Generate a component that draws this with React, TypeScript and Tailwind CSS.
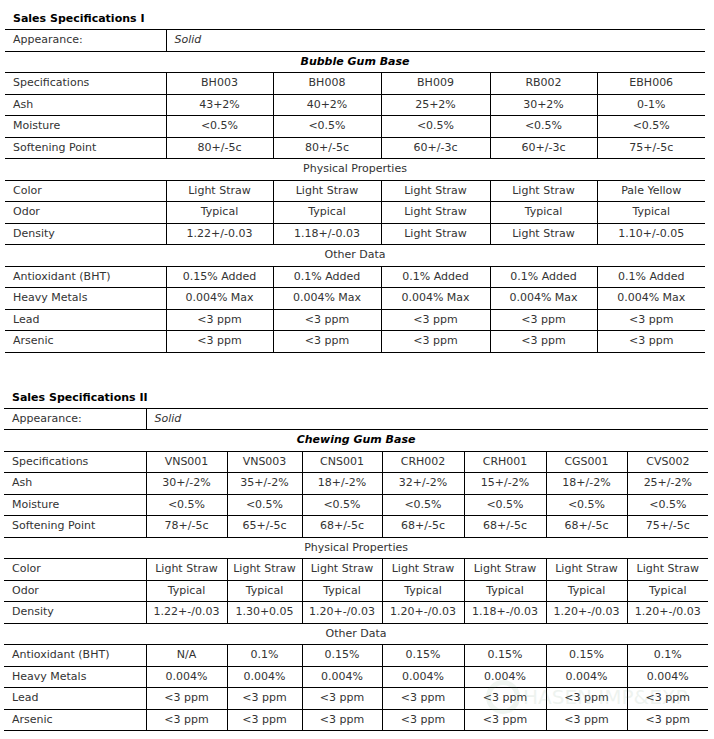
import React from "react";

type Section = { title: string; rows: string[][] };

type Spec = {
  title: string;
  base: string;
  cols: number[];
  codes: string[];
  sections: Section[];
};

const specs: Spec[] = [
  {
    title: "Sales Specifications I",
    base: "Bubble Gum Base",
    cols: [161, 107, 108, 109, 107, 108],
    codes: ["BH003", "BH008", "BH009", "RB002", "EBH006"],
    sections: [
      {
        title: "",
        rows: [
          ["Ash", "43+2%", "40+2%", "25+2%", "30+2%", "0-1%"],
          ["Moisture", "<0.5%", "<0.5%", "<0.5%", "<0.5%", "<0.5%"],
          ["Softening Point", "80+/-5c", "80+/-5c", "60+/-3c", "60+/-3c", "75+/-5c"],
        ],
      },
      {
        title: "Physical Properties",
        rows: [
          ["Color", "Light Straw", "Light Straw", "Light Straw", "Light Straw", "Pale Yellow"],
          ["Odor", "Typical", "Typical", "Light Straw", "Typical", "Typical"],
          ["Density", "1.22+/-0.03", "1.18+/-0.03", "Light Straw", "Light Straw", "1.10+/-0.05"],
        ],
      },
      {
        title: "Other Data",
        rows: [
          ["Antioxidant (BHT)", "0.15% Added", "0.1% Added", "0.1% Added", "0.1% Added", "0.1% Added"],
          ["Heavy Metals", "0.004% Max", "0.004% Max", "0.004% Max", "0.004% Max", "0.004% Max"],
          ["Lead", "<3 ppm", "<3 ppm", "<3 ppm", "<3 ppm", "<3 ppm"],
          ["Arsenic", "<3 ppm", "<3 ppm", "<3 ppm", "<3 ppm", "<3 ppm"],
        ],
      },
    ],
  },
  {
    title: "Sales Specifications II",
    base: "Chewing Gum Base",
    cols: [142, 81, 75, 80, 82, 82, 81, 81],
    codes: ["VNS001", "VNS003", "CNS001", "CRH002", "CRH001", "CGS001", "CVS002"],
    sections: [
      {
        title: "",
        rows: [
          ["Ash", "30+/-2%", "35+/-2%", "18+/-2%", "32+/-2%", "15+/-2%", "18+/-2%", "25+/-2%"],
          ["Moisture", "<0.5%", "<0.5%", "<0.5%", "<0.5%", "<0.5%", "<0.5%", "<0.5%"],
          ["Softening Point", "78+/-5c", "65+/-5c", "68+/-5c", "68+/-5c", "68+/-5c", "68+/-5c", "75+/-5c"],
        ],
      },
      {
        title: "Physical Properties",
        rows: [
          ["Color", "Light Straw", "Light Straw", "Light Straw", "Light Straw", "Light Straw", "Light Straw", "Light Straw"],
          ["Odor", "Typical", "Typical", "Typical", "Typical", "Typical", "Typical", "Typical"],
          ["Density", "1.22+-/0.03", "1.30+0.05", "1.20+-/0.03", "1.20+-/0.03", "1.18+-/0.03", "1.20+-/0.03", "1.20+-/0.03"],
        ],
      },
      {
        title: "Other Data",
        rows: [
          ["Antioxidant (BHT)", "N/A", "0.1%", "0.15%", "0.15%", "0.15%", "0.15%", "0.1%"],
          ["Heavy Metals", "0.004%", "0.004%", "0.004%", "0.004%", "0.004%", "0.004%", "0.004%"],
          ["Lead", "<3 ppm", "<3 ppm", "<3 ppm", "<3 ppm", "<3 ppm", "<3 ppm", "<3 ppm"],
          ["Arsenic", "<3 ppm", "<3 ppm", "<3 ppm", "<3 ppm", "<3 ppm", "<3 ppm", "<3 ppm"],
        ],
      },
    ],
  },
];

const DataRow = ({ cells }: { cells: string[] }) => (
  <tr className="h-[21.5px] border-b border-black">
    {cells.map((c, i) =>
      i === 0 ? (
        <td key={i} className="pl-[8px] text-left">
          {c}
        </td>
      ) : (
        <td key={i} className="border-l border-black text-center">
          {c}
        </td>
      )
    )}
  </tr>
);

const SpecTable = ({ spec }: { spec: Spec }) => {
  const span = spec.cols.length;
  return (
    <div>
      <h2 className="pl-[8px] text-[11px] font-bold leading-[14px] text-black">
        {spec.title}
      </h2>
      <table
        className="mt-[3px] table-fixed border-collapse border-t border-black text-[11px] text-[#333]"
        style={{ width: spec.cols.reduce((a, b) => a + b, 0) }}
      >
        <colgroup>
          {spec.cols.map((w, i) => (
            <col key={i} style={{ width: w }} />
          ))}
        </colgroup>
        <tbody>
          <tr className="h-[21.5px] border-b border-black">
            <td className="pl-[8px]">Appearance:</td>
            <td colSpan={span - 1} className="border-l border-black pl-[8px] italic">
              Solid
            </td>
          </tr>
          <tr className="h-[21.5px] border-b border-black">
            <td colSpan={span} className="text-center font-bold italic text-black">
              {spec.base}
            </td>
          </tr>
          <DataRow cells={["Specifications", ...spec.codes]} />
          {spec.sections.map((s, si) => (
            <React.Fragment key={si}>
              {s.title && (
                <tr className="h-[21.5px] border-b border-black">
                  <td colSpan={span} className="text-center">
                    {s.title}
                  </td>
                </tr>
              )}
              {s.rows.map((r, ri) => (
                <DataRow key={ri} cells={r} />
              ))}
            </React.Fragment>
          ))}
        </tbody>
      </table>
    </div>
  );
};

export default function App() {
  return (
    <div
      className="relative h-[739px] w-[714px] overflow-hidden bg-white"
      style={{ fontFamily: '"DejaVu Sans", Verdana, sans-serif' }}
    >
      <div className="pl-[5px] pt-[12px]">
        <SpecTable spec={specs[0]} />
      </div>
      <div className="pl-[4px] pt-[38px]">
        <SpecTable spec={specs[1]} />
      </div>
      <div className="pointer-events-none absolute left-[486px] top-[680px] flex items-center gap-[3px] opacity-[0.1]">
        <div className="h-[34px] w-[34px] rounded-full border-[5px] border-[#6a9a7a]" />
        <span className="text-[20px] leading-[22px] text-[#5f8f70]">HASEN IMP&amp;EXP</span>
      </div>
    </div>
  );
}
